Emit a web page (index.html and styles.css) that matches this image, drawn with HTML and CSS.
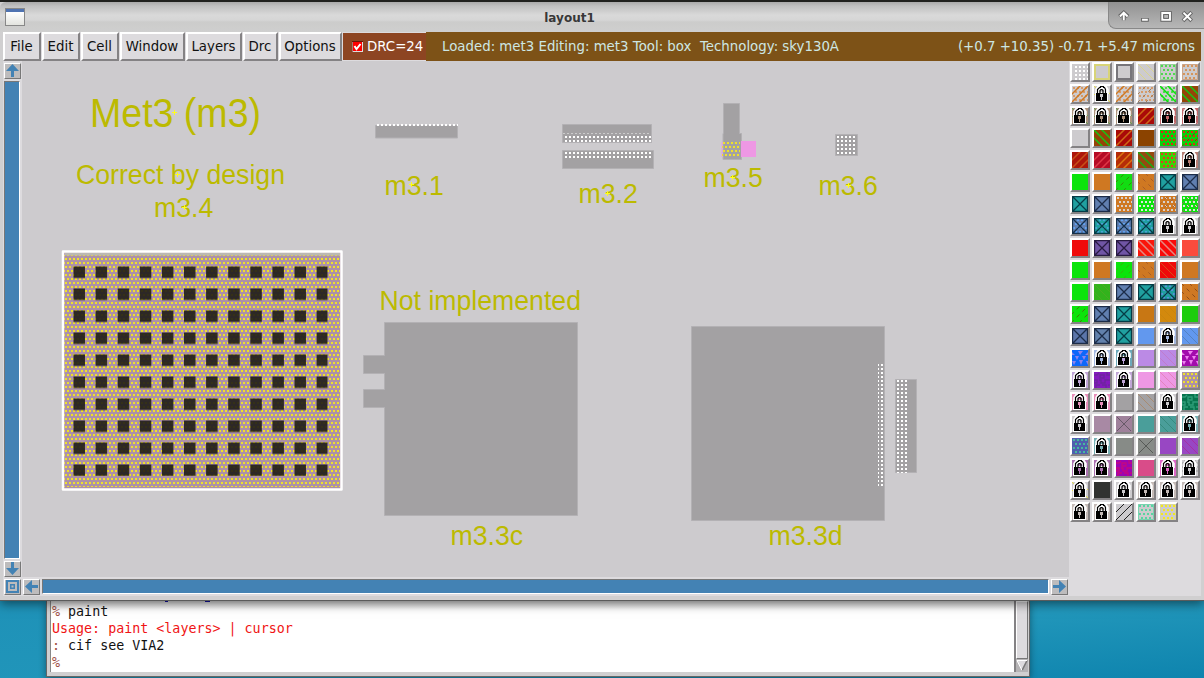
FILE: index.html
```
<!DOCTYPE html>
<html lang="en">
<head>
<meta charset="utf-8">
<title>layout1</title>
<link rel="stylesheet" href="styles.css">
</head>
<body>
<div class="window">
  <header class="titlebar">
    <span class="app-icon"></span>
    <span class="title">layout1</span>
    <svg class="controls" width="96" height="27" viewBox="1109 2 96 27">
      <g fill="none" stroke="#666" stroke-width="4"><path d="M1123 21v-7M1118.500 17l4.500-4 4.500 4M1141 20.500h8"/><path d="M1163 13.500h8v7h-8z"/><path d="M1184.500 12.500l9 9M1193.500 12.500l-9 9"/></g>
      <g fill="none" stroke="#fff" stroke-width="2"><path d="M1123 21v-7M1119 17l4-4 4 4M1142 20.500h6"/><path d="M1163 13.500h8v7h-8z"/><path d="M1185 13l8 8M1193 13l-8 8"/></g>
      <path d="M1164.500 15h5v4h-5z" fill="#bbb" stroke="#666"/>
    </svg>
  </header>
  <nav class="menubar">
    <button class="menu m-file">File</button><button class="menu m-edit">Edit</button><button class="menu m-cell">Cell</button><button class="menu m-window">Window</button><button class="menu m-layers">Layers</button><button class="menu m-drc">Drc</button><button class="menu m-options">Options</button>
    <div class="drc"><svg class="check" width="11" height="11" viewBox="0 0 11 11"><rect x=".5" y=".5" width="10" height="10" fill="#f00" stroke="#ddd"/><path d="M0 11V.5h11" fill="none" stroke="#6b1508"/><path d="M2.500 5l2 3 4-5" fill="none" stroke="#fff" stroke-width="2"/></svg>DRC=24</div>
    <div class="status"><span>Loaded: met3 Editing: met3 Tool: box&nbsp; Technology: sky130A</span><span>(+0.7 +10.35) -0.71 +5.47 microns</span></div>
  </nav>
  <main class="work">
    <div class="vscroll">
      <span class="arrow"><svg width="13" height="13" viewBox="0 0 13 13"><path d="M6.500 0L13 7H8v6H5V7H0z"/></svg></span>
      <span class="vbar"></span>
      <span class="arrow"><svg width="13" height="13" viewBox="0 0 13 13"><path d="M6.500 13L0 6h5V0h3v6h5z"/></svg></span>
    </div>
    <svg class="layout" width="1047" height="516" viewBox="22 61 1047 516">
      <defs>
        <pattern id="white" x="1" y="0" width="4" height="4" patternUnits="userSpaceOnUse"><path d="M0 0h2v2H0z" fill="#fff"/></pattern>
        <pattern id="gold" x="1" y="2" width="4" height="8" patternUnits="userSpaceOnUse"><path d="M0 0h2v2H0zM2 4h2v2H2z" fill="#efe12b"/></pattern>
        <pattern id="cuts" x="73.500" y="266.500" width="22.100" height="22" patternUnits="userSpaceOnUse"><rect width="11.500" height="11.500" fill="#1b1915" fill-opacity=".88"/></pattern>
        <path id="mark" d="M-2.500 0h5M0-2.500v5" stroke="#ffff18" fill="none"/>
      </defs>
      <g class="metal">
        <path d="M375.500 125.500h82v12.500h-82zM562.500 124.500h89v18h-89zM562.500 150.500h91v18h-91zM723.500 103.500h16v30h2v26h-18.500v-26h.5zM835.500 134.500h22v21h-22zM384.500 322.500h193v193h-193v-108h-21v-18h21v-16h-21v-18h21zM691.500 326.500h193v194h-193zM895.500 379.500h21v93h-21z"/>
      </g>
      <path d="M741 141h15v16h-15zM721.500 142h1v15h-1z" fill="#ee98e4"/>
      <path d="M377 124h81v2h-81zM563 136h88v6h-88zM563 152h90v6h-90zM837 136h20v19h-20zM878 364h6v124h-6zM897 380h10v93h-10z" fill="url(#white)"/>
      <path d="M563 133.500h88" stroke="#ccc" stroke-dasharray="2 2"/>
      <rect x="722" y="141" width="18" height="16" fill="url(#gold)"/>
      <rect x="62" y="251" width="280" height="239" fill="#ad91a7"/>
      <rect x="64" y="255" width="276" height="232" fill="url(#gold)"/>
      <rect x="73" y="266" width="254.500" height="210" fill="url(#cuts)"/>
      <path d="M65 254h275" stroke="#bbb8b3" stroke-width="3"/>
      <rect x="63" y="251.500" width="278.500" height="238" fill="none" stroke="#fff" stroke-width="2.500" stroke-linejoin="round"/>
      <g class="labels">
        <text class="heading" x="90" y="127" textLength="171" lengthAdjust="spacingAndGlyphs">Met3 (m3)</text>
        <text x="76" y="184" textLength="209" lengthAdjust="spacingAndGlyphs">Correct by design</text>
        <text x="154" y="217" textLength="59.400" lengthAdjust="spacingAndGlyphs">m3.4</text>
        <text x="384.500" y="195" textLength="59.400" lengthAdjust="spacingAndGlyphs">m3.1</text>
        <text x="578.500" y="203" textLength="59.400" lengthAdjust="spacingAndGlyphs">m3.2</text>
        <text x="703.500" y="187" textLength="59.400" lengthAdjust="spacingAndGlyphs">m3.5</text>
        <text x="818.500" y="195" textLength="59.400" lengthAdjust="spacingAndGlyphs">m3.6</text>
        <text x="379.500" y="310" textLength="201.500" lengthAdjust="spacingAndGlyphs">Not implemented</text>
        <text x="450.500" y="545" textLength="72.700" lengthAdjust="spacingAndGlyphs">m3.3c</text>
        <text x="768.500" y="545" textLength="74.200" lengthAdjust="spacingAndGlyphs">m3.3d</text>
      </g>
      <use href="#mark" x="174.500" y="112.500"/><use href="#mark" x="177.500" y="174.500"/><use href="#mark" x="184.500" y="207.500"/><use href="#mark" x="411.500" y="184.500"/><use href="#mark" x="607.500" y="193.500"/><use href="#mark" x="732.500" y="177.500"/><use href="#mark" x="848.500" y="185.500"/>
    </svg>
    <aside class="palette" id="palette"></aside>
    <div class="hscroll">
      <span class="arrow"><svg width="13" height="13" viewBox="0 0 13 13"><path d="M0 0h13v13H0zM2 2v9h9V2zM4 4h5v5H4zM5.500 5.500v2h2v-2z" fill-rule="evenodd"/></svg></span>
      <span class="arrow"><svg width="13" height="13" viewBox="0 0 13 13"><path d="M0 6.500L7 0v5h6v3H7v5z"/></svg></span>
      <span class="hbar"></span>
      <span class="arrow"><svg width="13" height="13" viewBox="0 0 13 13"><path d="M13 6.500L6 13V8H0V5h6V0z"/></svg></span>
    </div>
  </main>
</div>
<section class="console">
  <div class="output">
    <svg class="clipped-line" width="60" height="2" viewBox="0 0 60 2"><path d="M0 0h3v1H0zM40 0h5v1h-5z" fill="#11a"/></svg>
    <p><i>%</i> paint</p>
    <p class="error">Usage: paint &lt;layers&gt; | cursor</p>
    <p><i>:</i> cif see VIA2</p>
    <p><i>%</i></p>
  </div>
  <div class="con-scroll"><span class="thumb"></span><svg width="12" height="13" viewBox="0 0 12 13"><path fill="#b5b3b5" d="M0 0h12v13H0z"/><path d="M1 1.500h10l-5 10z" fill="#dddbde"/><path d="M11 1.500l-5 10" stroke="#777" stroke-width="1.500"/><path d="M11 1.500H1l5 10" stroke="#fff" fill="none"/></svg></div>
</section>
<script src="palette.js"></script>
</body>
</html>
```
FILE: styles.css
```
* { box-sizing: border-box; }
body {
  margin: 0; width: 1204px; height: 678px; overflow: hidden;
  display: flex; flex-direction: column;
  font: 13.33px "DejaVu Sans", sans-serif; color: #111;
  background: linear-gradient(175deg, #1079ac 0, #2196ba 90%, #0e84ae 100%);
}
.window {
  width: 1204px; height: 601px; flex: none; position: relative;
  border-top: 2px solid #20211e; border-bottom: 1px solid #5b5b5b;
  background: #d0cfd0; box-shadow: 0 3px 10px rgba(0,0,0,.5);
}
.titlebar {
  height: 30px; display: flex; align-items: flex-start; justify-content: space-between;
  background: linear-gradient(#aaa 0, #c0c0c0 4px, #d9d9d9 13px, #d6d6d6 18px, #cccccb 20px, #cfcfcf 30px);
  border-top-left-radius: 6px;
}
.app-icon { width: 20px; height: 18px; margin: 6px 0 0 5px; border: 1px solid #888; background: linear-gradient(#4f73b1 0 3px, #fff 3px, #e3e4df); }
.title { font-weight: bold; font-size: 12px; color: #383838; margin: 9px 0 0 6px; line-height: 14px; }
.controls { background: linear-gradient(#919191, #b7b7b7); border-bottom-left-radius: 8px; border-left: 1px solid #888; border-bottom: 1px solid #888; }
.menubar { height: 29px; margin: 0 3px; display: flex; background: #dddbde; }
.menu {
  font: 13.33px "DejaVu Sans", sans-serif; color: #111; padding: 0 1px 0 0; height: 29px; margin-right: 1px;
  background: #dddbde; border: 2px solid; border-color: #fff #848284 #848284 #fff; border-radius: 0;
}
.m-file { width: 38px; } .m-edit { width: 38px; } .m-cell { width: 38px; } .m-window { width: 65px; }
.m-layers { width: 56px; } .m-drc { width: 35px; } .m-options { width: 63px; }
.drc { width: 83px; margin: 1px 0 1px 0; padding-left: 9px; display: flex; align-items: center; gap: 4px; background: #8d4522; color: #fff; white-space: nowrap; }
.check { flex: none; }
.status { flex: 1; padding: 0 6px 0 16px; display: flex; align-items: center; justify-content: space-between; background: #7d5217; color: #cde7e4; }
.work { height: 538px; padding-left: 3px; padding-right: 3px; display: grid; grid-template-columns: 19px 1047px 132px; grid-template-rows: 516px 19px; }
.vscroll { display: flex; flex-direction: column; gap: 2px; padding: 2px 0 0 1px; background: #dddbde; }
.arrow { width: 17px; height: 16px; flex: none; display: block; border: 1px solid; border-color: #fff #777 #777 #fff; background: #bdbcbd; padding: 0 1px; }
.arrow svg { display: block; }
.arrow path { fill: #4382b4; }
.vbar { height: 478px; width: 16px; border: 1px solid; border-color: #777 #fff #fff #777; background: #4382b4; }
.layout { display: block; background: #cdcbce; }
.metal { fill: #a3a1a3; stroke: #b3b1b4; }
.labels { fill: #bcba00; font: 28px "Liberation Sans", Arial, sans-serif; }
.labels .heading { font-size: 40px; }
.palette {
  grid-row: 1 / 3; grid-column: 3; background: #dddbde; padding: 1px 0 0 1px;
  display: grid; grid-template-columns: repeat(6, 20px); grid-auto-rows: 20px; gap: 2px;
}
.swatch { width: 20px; height: 20px; border: 2px solid; border-color: #fff #848284 #848284 #fff; }
.swatch svg { display: block; }
.hscroll { grid-column: 1 / 3; display: flex; gap: 2px; padding: 2px 1px 0 1px; background: #dddbde; }
.hbar { flex: 1; height: 15px; border: 1px solid; border-color: #777 #fff #fff #777; background: #4382b4; }
.console {
  width: 984px; height: 76px; margin-left: 46px; display: flex; padding: 0 1px 4px 3px;
  background: #d0cfd0; border: solid #666; border-width: 0 1px 1px 1px; box-shadow: 0 2px 7px rgba(0,0,0,.4);
}
.output { flex: 1; border-left: 1px solid #888; background: linear-gradient(#ddd, #fff 9px); font: 13.33px/17px "DejaVu Sans Mono", monospace; }
.output p { margin: 0; padding-left: 1px; white-space: pre; }
.output i { font-style: normal; color: #a05045; }
.output .error { color: #f01414; }
.clipped-line { display: block; margin-left: 114px; }
.con-scroll { width: 14px; display: flex; flex-direction: column; border-left: 2px solid #848284; background: #b5b3b5; }
.thumb { flex: 1; border: 1px solid; border-color: #fff #777 #777 #fff; background: #dddbde; }
.con-scroll svg { display: block; }
```
FILE: palette.js
```
// Each entry: background, then marks as kind:colour. Kinds are keys of `marks`.
var rows = [
  ["#cdcbce w:#fff", "#cdcbce f:#d8d477", "#cdcbce f:#77757a", "#cdcbce t:#ddd57b", "#cdcbce g:#50d850 e:#9c9", "#cdcbce g:#d6955b e:#cba58b"],
  ["#cdcbce g:#d69b69 u:#cf7822", "#cdcbce t:#e8e030 L", "#cdcbce g:#d69b69 u:#cf7822", "#cdcbce g:#d69b69 s:#a97a52", "#cdcbce g:#4ce04c d:#0be00b", "#954407 d:#18c414"],
  ["#ac927b t:#50a050 L", "#ac927b t:#50a050 L", "#ac927b t:#50a050 L", "#a90a08 u:#cf6a18", "#c16568 t:#c8a0a0 L", "#c16568 t:#c8a0a0 L"],
  ["#cdcbce", "#954407 d:#18c414", "#a90a08 u:#cf6a18", "#8b4300", "#0bd00b g:#e02812", "#0bd00b g:#e02812 s:#605b10"],
  ["#ad160b u:#c75018", "#b50b25 u:#df3848", "#b52c08 u:#db7612", "#954a10 d:#18ae14", "#38d408 g:#e04020", "#b67e74 L"],
  ["#0be40b", "#cf7822", "#12dd12 s:#378a0a", "#cf7822 s2:#a95d27", "#20a0a0 X:#053c46", "#607fb0 X:#1c2c48"],
  ["#20a0a0 X:#053c46", "#607fb0 X:#1c2c48", "#cf7822 g:#d8d0cb", "#0be40b g:#dce5dc", "#cf7822 g:#d8d0cb s:#a86430", "#0be40b g:#dce5dc s:#887c50"],
  ["#607fb0 g:#61a1f0 X:#15304a", "#20a0a0 g:#49a4d5 X:#053c46", "#607fb0 g:#61a1f0 X:#15304a", "#20a0a0 g:#49a4d5 X:#053c46", "#cdcbce L", "#cdcbce L"],
  ["#ef0a0a", "#7055a5 X:#281a42", "#7055a5 X:#281a42", "#fa160a d:#e48a83", "#fa0a0a d:#e48a83", "#fa4b3d"],
  ["#0be40b", "#cf7822", "#0be40b s:#39b20a", "#cf7822 s2:#a95d27", "#ef0a0a t:#d15d20", "#cf7822"],
  ["#0be40b", "#32b31c t:#4ea925", "#607fb0 X:#1c2c48", "#20a0a0 X:#053c46", "#20a0a0 g:#5793da X:#053c46", "#cf7822 s2:#8f4d18"],
  ["#0be40b s:#46770a", "#607fb0 X:#1c2c48", "#20a0a0 X:#053c46", "#c87714", "#d3890d t:#c8840f", "#1ccd0c"],
  ["#5b75aa X:#1c2c48", "#6281ac X:#1c2c48", "#20a0a0 X:#053c46", "#6298ee", "#a4b8e0 L", "#6298ee t:#507db8"],
  ["#0d67fa b:#8d82ee", "#a4b8e0 L", "#6ca9ba L:#bca2da", "#bb8ae5", "#bb8ae5 t:#c278c5", "#a20bac b:#ee82ef"],
  ["#c0a5d6 L", "#8419bd r:#6d259e", "#c0a5d6 L", "#ee98e4", "#ee98e4 t:#e17eb5", "#ad91a7 y:#f0e128"],
  ["#e88eb9 L", "#e88eb9 L", "#a3a1a3", "#a3a1a3 t:#aa8565", "#cdcbce L", "#08754e r:#2f9e79"],
  ["#cdcbce L", "#a889a4", "#9f819b x:#675968", "#4a9e9a", "#4a9e9a t:#328779", "#77b0b4 L"],
  ["#4f5fae y:#45baa0", "#77b0b4 L", "#878b87", "#878b87 x:#585b58", "#9847c3", "#9847c3 t:#a92b9c"],
  ["#aa70b0 L", "#aa70b0 L", "#9c05b2 r:#c40881", "#d94c89", "#dd66c6 L", "#cdcbce h:#999 L"],
  ["#cdcbce t:#e8e030 L", "#313331", "#cdcbce L", "#c5bbb7 L", "#c5bbb7 L", "#c5bbb7 L"],
  ["#c5bbb7 L", "#c5bbb7 L", "#cdcbce u2:#222", "#cdcbce y:#59d4a1 e:#79d3b0", "#cdcbce y:#f3e81f e:#dad79b"]
];

function grid(c, x0, y0, shift) {
  var d = "";
  for (var y = y0, n = 0; y < 16; y += 4, n++)
    for (var x = x0 + (shift && n % 2 ? 2 : 0); x < 16; x += 4) d += "M" + x + " " + y + "h2v2h-2z";
  return '<path d="' + d + '" fill="' + c + '"/>';
}
function line(c, d, extra) {
  return '<path d="' + d + '" fill="none" stroke="' + c + '" ' + (extra || "") + '/>';
}
var down = "M-1 7l10 10M-1-1l18 18M7-1l10 10";
var up = "M-1 9L9-1M-1 17L17-1M7 17L17 7";
var marks = {
  w: function (c) { return grid(c, 3, 2, false); },
  g: function (c) { return grid(c, 1, 1, true); },
  y: function (c) { return grid(c, 1, 1, true); },
  f: function (c) { return line(c, "M1 1h14v14H1z", 'stroke-width="2"'); },
  e: function (c) { return line(c, "M.5.5h15v15H.5z"); },
  d: function (c) { return line(c, down, 'stroke-width="1.5"'); },
  t: function (c) { return line(c, down, 'stroke-width=".8"'); },
  u: function (c) { return line(c, up, 'stroke-width="1.5"'); },
  u2: function (c) { return line(c, up); },
  s: function (c) { return line(c, up, 'stroke-dasharray="4 4"'); },
  s2: function (c) { return line(c, down, 'stroke-dasharray="4 4"'); },
  X: function (c) { return line(c, "M.5.5h15v15H.5zM1 1l14 14M15 1L1 15", 'stroke-width="1.3"'); },
  x: function (c) { return line(c, "M1 1l14 14M15 1L1 15"); },
  h: function (c) { return line(c, "M0 3h16M0 7h16M0 11h16M3 0v16M13 0v16"); },
  b: function (c) { return '<path fill="' + c + '" d="M0 2l3 3H0zM6 1h5L8 5zM16 2l-3 3h3zM3 6h4l-2 4zM10 6h4l-2 4zM0 11h4l-2 4zM7 10h4l-2 5zM14 11h2v4z"/>'; },
  r: function (c) { return line(c, "M0 3h3l2-2M6 3h4v3H6zM13 0v3h3M0 8h3v3H0zM5 8h2v3h4V8h5M2 16v-3h4M8 13h4v3M14 13h2", 'stroke-width="1.4"'); },
  L: function (c, bg) {
    return '<path d="M4 8V4l2-3h5l2 3v4" transform="translate(-.5)" fill="none" stroke="#fff" stroke-width="4.500"/>' +
      '<path d="M1 6h13v10H1z" fill="#fff"/>' +
      '<path d="M3.500 7.500v-4l2-2h1V.500h3v1h1l1 2v4M6 8V4.500L7 3.500h1l1 1V8" fill="none" stroke="#000" stroke-width="1.200"/>' +
      '<path d="M2 7h11v8H2z" fill="#000"/><path d="M6 8h3v3H8v3H7v-3H6z" fill="' + (c || bg) + '"/>';
  }
};

document.getElementById("palette").innerHTML = rows.map(function (row) {
  return row.map(function (spec) {
    var parts = spec.split(" "), bg = parts[0];
    var body = parts.slice(1).map(function (p) {
      var kv = p.split(":");
      return marks[kv[0]](kv[1], bg);
    }).join("");
    return '<span class="swatch"><svg width="16" height="16" viewBox="0 0 16 16"><rect width="16" height="16" fill="' + bg + '"/>' + body + '</svg></span>';
  }).join("");
}).join("");
```
